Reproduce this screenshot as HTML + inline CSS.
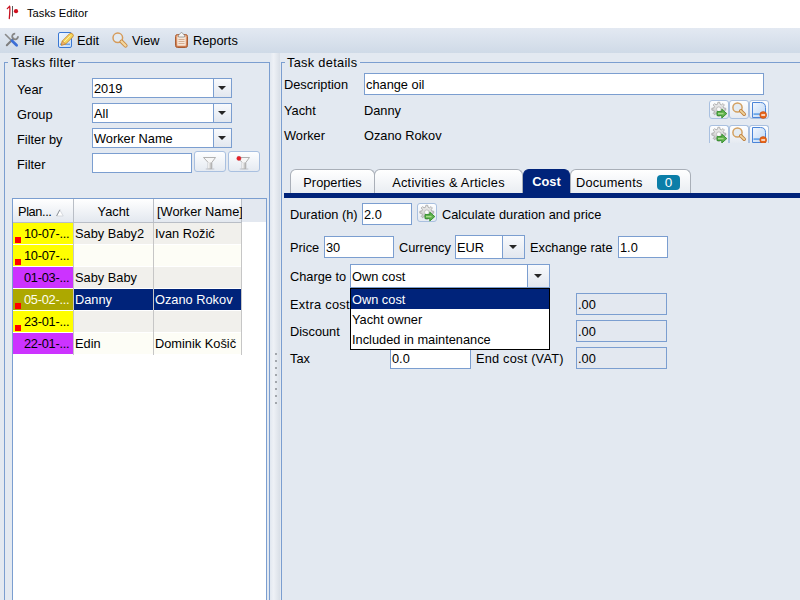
<!DOCTYPE html>
<html><head><meta charset="utf-8"><style>
*{box-sizing:border-box;margin:0;padding:0}
html,body{width:800px;height:600px;overflow:hidden;background:#E3E9F1;font-family:"Liberation Sans",sans-serif;font-size:12.8px;color:#000}
.t{position:absolute;white-space:nowrap;line-height:15px}
.b{position:absolute}
#title{position:absolute;left:0;top:0;width:800px;height:28px;background:#fff}
#menu{position:absolute;left:0;top:28px;width:800px;height:25px;background:linear-gradient(#E3E9F2,#CFDAE7)}
.grp{position:absolute;border:1px solid #7B9ED0}
.gt{position:absolute;background:#E3E9F1;padding:0 2px;line-height:15px;white-space:nowrap}
.fld{position:absolute;background:#fff;border:1px solid #7B9ED0}
.fld span,.cb span{position:absolute;left:1px;white-space:nowrap;line-height:15px}
.cb{position:absolute;background:#fff;border:1px solid #7B9ED0}
.cb .ab{position:absolute;right:0;top:0;bottom:0;width:18px;border-left:1px solid #7B9ED0;background:linear-gradient(#F8FAFD,#E2E7EF)}
.cb .ab:after{content:"";position:absolute;left:4px;top:7px;border-left:4px solid transparent;border-right:4px solid transparent;border-top:4px solid #262626}
.cb .ab.w:after{left:6px;top:9px}
.btn{position:absolute;border:1px solid #A9C0E0;border-radius:3px;background:linear-gradient(#FDFEFF,#E5EAF1)}
.btn svg{position:absolute;left:0;top:0}
.th{position:absolute;top:0;height:24px;border-right:1px solid #B9BEC6;border-bottom:1px solid #B9BEC6;background:linear-gradient(#FFFFFF,#E3E8EF);line-height:15px;padding-top:4.5px;white-space:nowrap}
.cell{position:absolute;height:22px;line-height:21px;white-space:nowrap;overflow:hidden}
.tab{position:absolute;top:169px;height:24px;border:1px solid #A9AFB8;border-bottom:none;border-radius:6px 6px 0 0;background:linear-gradient(#FFFFFF,#E9EDF2);line-height:15px;padding-top:5px;text-align:center;white-space:nowrap}
</style></head><body>
<div id="title"></div>
<svg class="b" style="left:6px;top:4px" width="14" height="18" viewBox="0 0 14 18"><path d="M1.3 4.6 L3.6 2.3 C4.2 3.5 3.9 8 3.3 14.5" stroke="#C8101E" stroke-width="1.3" fill="none" stroke-linecap="round"/><path d="M6.5 2 L6.5 12.5" stroke="#5a5a5a" stroke-width="1"/><circle cx="10" cy="7.2" r="2.1" fill="#D0101E"/></svg>
<div class="t" style="left:27px;top:6px;font-size:11.2px">Tasks Editor</div>
<div id="menu"></div>
<svg class="b" style="left:2px;top:31px" width="18" height="18" viewBox="0 0 18 18"><path d="M4.8 14.2 L11.5 7.5" stroke="#7E7E7E" stroke-width="2" stroke-linecap="round"/><path d="M13.2 2.6 A2.9 2.9 0 1 0 16 5.3" stroke="#858585" stroke-width="1.8" fill="none"/><path d="M3.5 3.5 L8.5 8.5" stroke="#8a8a8a" stroke-width="1.6" stroke-linecap="round"/><path d="M10 9.8 L14.6 14.2" stroke="#3D6FD6" stroke-width="2.8" stroke-linecap="round"/></svg>
<svg class="b" style="left:57px;top:31px" width="18" height="18" viewBox="0 0 18 18"><defs><linearGradient id="dg" x1="0" y1="0" x2="1" y2="1"><stop offset="0" stop-color="#F4F9FF"/><stop offset="1" stop-color="#C5DCF5"/></linearGradient></defs><rect x="1.5" y="1.5" width="13" height="15" rx="1.5" fill="url(#dg)" stroke="#3A78D4" stroke-width="1"/><rect x="3" y="12.5" width="10" height="1.5" fill="#6FA6E8"/><path d="M4.3 14.2 L5.4 9.9 L12.4 2.9 A2.2 2.2 0 0 1 15.6 6.1 L8.6 13.1 Z" fill="#F5D55A" stroke="#C8862E" stroke-width="0.9"/><path d="M6.6 11.4 L13.4 4.6" stroke="#FBF0A8" stroke-width="1"/><path d="M4.3 14.2 L5.4 9.9 L8.6 13.1 Z" fill="#E8B07A" stroke="#C8862E" stroke-width="0.6"/></svg>
<svg class="b" style="left:111px;top:31px" width="18" height="18" viewBox="0 0 18 18"><circle cx="6.8" cy="6.8" r="4.8" fill="#E2EAF2" stroke="#D69B5A" stroke-width="1.5"/><path d="M10.5 10.5 L14.6 14.6" stroke="#C98A45" stroke-width="4" stroke-linecap="round"/><path d="M10.5 10.5 L14.6 14.6" stroke="#F2D69E" stroke-width="2.2" stroke-linecap="round"/></svg>
<svg class="b" style="left:173px;top:31px" width="18" height="18" viewBox="0 0 18 18"><defs><linearGradient id="cg" x1="0" y1="0" x2="0" y2="1"><stop offset="0" stop-color="#E9A57A"/><stop offset="1" stop-color="#C9754A"/></linearGradient></defs><rect x="2.5" y="3.5" width="12" height="13" rx="2" fill="url(#cg)" stroke="#A85E35" stroke-width="1"/><rect x="4.2" y="5.5" width="8.6" height="9.3" rx="0.5" fill="#F6E6D8"/><path d="M5.5 8.5 H11.5 M5.5 10.5 H11.5 M5.5 12.5 H11.5" stroke="#D6AE92" stroke-width="1"/><path d="M5.5 6 L5.5 4.2 L8.5 1.2 L11.5 4.2 L11.5 6 Z" fill="#F4F4F4" stroke="#8E8E8E" stroke-width="0.8"/></svg>
<div class="t" style="left:24px;top:33px">File</div>
<div class="t" style="left:77px;top:33px">Edit</div>
<div class="t" style="left:132px;top:33px">View</div>
<div class="t" style="left:193px;top:33px">Reports</div>
<div class="grp" style="left:4px;top:62px;width:266px;height:560px"></div>
<div class="gt" style="left:8px;top:55px;padding-left:3px;letter-spacing:0.35px">Tasks filter</div>
<div class="t" style="left:17px;top:82px">Year</div>
<div class="cb" style="left:92px;top:78px;width:140px;height:20px"><span style="top:2px">2019</span><div class="ab"></div></div>
<div class="t" style="left:17px;top:107px">Group</div>
<div class="cb" style="left:92px;top:103px;width:140px;height:20px"><span style="top:2px">All</span><div class="ab"></div></div>
<div class="t" style="left:17px;top:132px">Filter by</div>
<div class="cb" style="left:92px;top:128px;width:140px;height:20px"><span style="top:2px">Worker Name</span><div class="ab"></div></div>
<div class="t" style="left:17px;top:157px">Filter</div>
<div class="fld" style="left:92px;top:153px;width:100px;height:20px"></div>
<div class="btn" style="left:194px;top:151px;width:32px;height:21px"><svg width="32" height="21" style="left:-1px;top:-1px"><defs><linearGradient id="fg" x1="0" y1="0" x2="1" y2="0"><stop offset="0" stop-color="#FFFFFF"/><stop offset="1" stop-color="#A8A8A8"/></linearGradient></defs><ellipse cx="16" cy="18" rx="4.5" ry="0.9" fill="#CDD1D7"/><path d="M9.5 6.5 L21.5 6.5 L17.8 11.5 L17.8 17.5 L14.2 17.5 L14.2 11.5 Z" fill="#F7F7F7" stroke="#A8A8A8" stroke-width="0.9"/><rect x="14.2" y="11.5" width="3.6" height="6" fill="url(#fg)"/></svg></div>
<div class="btn" style="left:228px;top:151px;width:32px;height:21px"><svg width="32" height="21" style="left:-1px;top:-1px"><defs><linearGradient id="fg" x1="0" y1="0" x2="1" y2="0"><stop offset="0" stop-color="#FFFFFF"/><stop offset="1" stop-color="#A8A8A8"/></linearGradient></defs><ellipse cx="16" cy="18" rx="4.5" ry="0.9" fill="#CDD1D7"/><path d="M9.5 6.5 L21.5 6.5 L17.8 11.5 L17.8 17.5 L14.2 17.5 L14.2 11.5 Z" fill="#F7F7F7" stroke="#A8A8A8" stroke-width="0.9"/><rect x="14.2" y="11.5" width="3.6" height="6" fill="url(#fg)"/><circle cx="10.9" cy="7.4" r="2.1" fill="#E8202A" stroke="#C01820" stroke-width="0.4"/></svg></div>
<div class="b" style="left:12px;top:198px;width:255px;height:420px;background:#fff;border:1px solid #7B9ED0"></div>
<div class="th" style="left:13px;top:199px;width:61px;padding-left:5px;letter-spacing:-0.4px">Plan...</div>
<svg class="b" style="left:56px;top:209px" width="8" height="8"><path d="M3.8 0.8 L7.2 7 L0.6 7 Z" fill="#fff" stroke="#D2D6DB" stroke-width="0.9"/><path d="M3.8 0.8 L0.6 7" stroke="#8A8E94" stroke-width="0.9"/></svg>
<div class="th" style="left:74px;top:199px;width:80px;text-align:center">Yacht</div>
<div class="th" style="left:154px;top:199px;width:88px;padding-left:3px">[Worker Name]</div>
<div class="th" style="left:242px;top:199px;width:24px;height:23px;border:none;background:#E3E8F0"></div>
<div class="cell" style="left:13px;top:223px;width:60px;background:#FFFF00;border-bottom:1px solid #FFFFFF;color:#000;padding-left:11px;letter-spacing:-0.25px">10-07-...</div>
<div class="b" style="left:15px;top:237px;width:6px;height:6px;background:#FF0000"></div>
<div class="cell" style="left:74px;top:223px;width:79px;background:#F1F0EC;border-bottom:1px solid #fff;color:#000;padding-left:1px">Saby Baby2</div>
<div class="cell" style="left:154px;top:223px;width:87px;background:#F1F0EC;border-bottom:1px solid #fff;color:#000;padding-left:1px">Ivan Rožić</div>
<div class="cell" style="left:13px;top:245px;width:60px;background:#FFFF00;border-bottom:1px solid #FFFFFF;color:#000;padding-left:11px;letter-spacing:-0.25px">10-07-...</div>
<div class="b" style="left:15px;top:259px;width:6px;height:6px;background:#FF0000"></div>
<div class="cell" style="left:74px;top:245px;width:79px;background:#FDFDF6;border-bottom:1px solid #fff;color:#000;padding-left:1px"></div>
<div class="cell" style="left:154px;top:245px;width:87px;background:#FDFDF6;border-bottom:1px solid #fff;color:#000;padding-left:1px"></div>
<div class="cell" style="left:13px;top:267px;width:60px;background:#CC33FF;border-bottom:1px solid #FFFFFF;color:#000;padding-left:11px;letter-spacing:-0.25px">01-03-...</div>
<div class="cell" style="left:74px;top:267px;width:79px;background:#F1F0EC;border-bottom:1px solid #fff;color:#000;padding-left:1px">Saby Baby</div>
<div class="cell" style="left:154px;top:267px;width:87px;background:#F1F0EC;border-bottom:1px solid #fff;color:#000;padding-left:1px"></div>
<div class="cell" style="left:13px;top:289px;width:60px;background:#ADA800;border-bottom:1px solid #FFFFFF;color:#FFFFF0;padding-left:11px;letter-spacing:-0.25px">05-02-...</div>
<div class="b" style="left:15px;top:303px;width:6px;height:6px;background:#FF0000"></div>
<div class="cell" style="left:74px;top:289px;width:79px;background:#00237A;border-bottom:1px solid #fff;color:#fff;padding-left:1px">Danny</div>
<div class="cell" style="left:154px;top:289px;width:87px;background:#00237A;border-bottom:1px solid #fff;color:#fff;padding-left:1px">Ozano Rokov</div>
<div class="cell" style="left:13px;top:311px;width:60px;background:#FFFF00;border-bottom:1px solid #FFFFFF;color:#000;padding-left:11px;letter-spacing:-0.25px">23-01-...</div>
<div class="b" style="left:15px;top:325px;width:6px;height:6px;background:#FF0000"></div>
<div class="cell" style="left:74px;top:311px;width:79px;background:#F1F0EC;border-bottom:1px solid #fff;color:#000;padding-left:1px"></div>
<div class="cell" style="left:154px;top:311px;width:87px;background:#F1F0EC;border-bottom:1px solid #fff;color:#000;padding-left:1px"></div>
<div class="cell" style="left:13px;top:333px;width:60px;background:#CC33FF;border-bottom:1px solid #FFFFFF;color:#000;padding-left:11px;letter-spacing:-0.25px">22-01-...</div>
<div class="cell" style="left:74px;top:333px;width:79px;background:#FDFDF6;border-bottom:1px solid #fff;color:#000;padding-left:1px">Edin</div>
<div class="cell" style="left:154px;top:333px;width:87px;background:#FDFDF6;border-bottom:1px solid #fff;color:#000;padding-left:1px">Dominik Košič</div>
<div class="b" style="left:73px;top:223px;width:1px;height:132px;background:#C6C6C6"></div>
<div class="b" style="left:153px;top:223px;width:1px;height:132px;background:#C6C6C6"></div>
<div class="b" style="left:241px;top:223px;width:1px;height:132px;background:#C6C6C6"></div>
<div class="b" style="left:271px;top:53px;width:9px;height:547px;background:linear-gradient(90deg,#E6EBF2,#EEF1F6 30%,#D9DFE7)"></div>
<div class="b" style="left:275px;top:353px;width:2px;height:2px;background:#A2A6AC"></div>
<div class="b" style="left:275px;top:360px;width:2px;height:2px;background:#A2A6AC"></div>
<div class="b" style="left:275px;top:367px;width:2px;height:2px;background:#A2A6AC"></div>
<div class="b" style="left:275px;top:374px;width:2px;height:2px;background:#A2A6AC"></div>
<div class="b" style="left:275px;top:381px;width:2px;height:2px;background:#A2A6AC"></div>
<div class="b" style="left:275px;top:388px;width:2px;height:2px;background:#A2A6AC"></div>
<div class="b" style="left:275px;top:395px;width:2px;height:2px;background:#A2A6AC"></div>
<div class="b" style="left:275px;top:402px;width:2px;height:2px;background:#A2A6AC"></div>
<div class="grp" style="left:281px;top:62px;width:600px;height:560px"></div>
<div class="gt" style="left:285px;top:55px;padding-right:3px;letter-spacing:0.3px">Task details</div>
<div class="t" style="left:284px;top:77px">Description</div>
<div class="fld" style="left:364px;top:73px;width:400px;height:22px"><span style="top:3px">change oil</span></div>
<div class="t" style="left:284px;top:103px">Yacht</div>
<div class="t" style="left:364px;top:103px">Danny</div>
<div class="t" style="left:284px;top:128px">Worker</div>
<div class="t" style="left:364px;top:128px">Ozano Rokov</div>
<div class="btn" style="left:709px;top:100px;width:20px;height:19px;"><svg width="20" height="19" style="left:-1px;top:-1px"><defs><linearGradient id="gg" x1="0" y1="0" x2="0" y2="1"><stop offset="0" stop-color="#F2F2F2"/><stop offset="1" stop-color="#BDBDBD"/></linearGradient></defs><path d="M14.88 8.09 L16.73 8.24 L16.73 10.16 L14.88 10.31 L14.18 12.00 L15.38 13.42 L14.02 14.78 L12.60 13.58 L10.91 14.28 L10.76 16.13 L8.84 16.13 L8.69 14.28 L7.00 13.58 L5.58 14.78 L4.22 13.42 L5.42 12.00 L4.72 10.31 L2.87 10.16 L2.87 8.24 L4.72 8.09 L5.42 6.40 L4.22 4.98 L5.58 3.62 L7.00 4.82 L8.69 4.12 L8.84 2.27 L10.76 2.27 L10.91 4.12 L12.60 4.82 L14.02 3.62 L15.38 4.98 L14.18 6.40 Z" fill="url(#gg)" stroke="#A2A2A2" stroke-width="0.8"/><circle cx="9.8" cy="9.2" r="2.3" fill="#FAFAFA" stroke="#A8A8A8" stroke-width="0.6"/><path d="M8 11.6 H12.8 V9.2 L17.8 13.6 L12.8 18 V15.6 H8 Z" fill="#62B24E" stroke="#2E8C28" stroke-width="0.9"/><path d="M9 13.6 H14.5" stroke="#A6DB8E" stroke-width="1.4"/></svg></div>
<div class="btn" style="left:729px;top:100px;width:20px;height:19px;"><svg width="20" height="19" style="left:-1px;top:-1px"><circle cx="8.5" cy="7.5" r="4.6" fill="#E4ECF3" stroke="#D3A060" stroke-width="1.5"/><path d="M11.8 10.8 L15.2 14.2" stroke="#C08040" stroke-width="3.6" stroke-linecap="round"/><path d="M11.8 10.8 L15.2 14.2" stroke="#EFD49C" stroke-width="1.8" stroke-linecap="round"/></svg></div>
<div class="btn" style="left:749px;top:100px;width:20px;height:19px;"><svg width="20" height="19" style="left:-1px;top:-1px"><defs><linearGradient id="dg2" x1="0" y1="0" x2="1" y2="1"><stop offset="0" stop-color="#F2F7FE"/><stop offset="1" stop-color="#BCD6F4"/></linearGradient></defs><path d="M3.5 2.5 H11.5 Q16.5 2.5 16.5 7.5 V17.5 H3.5 Z" fill="url(#dg2)" stroke="#4A84D8" stroke-width="1"/><rect x="4.5" y="13.3" width="9" height="1.6" fill="#5FA0E8"/><circle cx="14.2" cy="15" r="3.4" fill="#E8661A" stroke="#C04A10" stroke-width="0.6"/><rect x="12.3" y="14.3" width="3.8" height="1.4" fill="#fff"/></svg></div>
<div class="btn" style="left:709px;top:125px;width:20px;height:19px;height:18px;border-bottom:none;border-radius:3px 3px 0 0;overflow:hidden;"><svg width="20" height="19" style="left:-1px;top:-1px"><defs><linearGradient id="gg" x1="0" y1="0" x2="0" y2="1"><stop offset="0" stop-color="#F2F2F2"/><stop offset="1" stop-color="#BDBDBD"/></linearGradient></defs><path d="M14.88 8.09 L16.73 8.24 L16.73 10.16 L14.88 10.31 L14.18 12.00 L15.38 13.42 L14.02 14.78 L12.60 13.58 L10.91 14.28 L10.76 16.13 L8.84 16.13 L8.69 14.28 L7.00 13.58 L5.58 14.78 L4.22 13.42 L5.42 12.00 L4.72 10.31 L2.87 10.16 L2.87 8.24 L4.72 8.09 L5.42 6.40 L4.22 4.98 L5.58 3.62 L7.00 4.82 L8.69 4.12 L8.84 2.27 L10.76 2.27 L10.91 4.12 L12.60 4.82 L14.02 3.62 L15.38 4.98 L14.18 6.40 Z" fill="url(#gg)" stroke="#A2A2A2" stroke-width="0.8"/><circle cx="9.8" cy="9.2" r="2.3" fill="#FAFAFA" stroke="#A8A8A8" stroke-width="0.6"/><path d="M8 11.6 H12.8 V9.2 L17.8 13.6 L12.8 18 V15.6 H8 Z" fill="#62B24E" stroke="#2E8C28" stroke-width="0.9"/><path d="M9 13.6 H14.5" stroke="#A6DB8E" stroke-width="1.4"/></svg></div>
<div class="btn" style="left:729px;top:125px;width:20px;height:19px;height:18px;border-bottom:none;border-radius:3px 3px 0 0;overflow:hidden;"><svg width="20" height="19" style="left:-1px;top:-1px"><circle cx="8.5" cy="7.5" r="4.6" fill="#E4ECF3" stroke="#D3A060" stroke-width="1.5"/><path d="M11.8 10.8 L15.2 14.2" stroke="#C08040" stroke-width="3.6" stroke-linecap="round"/><path d="M11.8 10.8 L15.2 14.2" stroke="#EFD49C" stroke-width="1.8" stroke-linecap="round"/></svg></div>
<div class="btn" style="left:749px;top:125px;width:20px;height:19px;height:18px;border-bottom:none;border-radius:3px 3px 0 0;overflow:hidden;"><svg width="20" height="19" style="left:-1px;top:-1px"><defs><linearGradient id="dg2" x1="0" y1="0" x2="1" y2="1"><stop offset="0" stop-color="#F2F7FE"/><stop offset="1" stop-color="#BCD6F4"/></linearGradient></defs><path d="M3.5 2.5 H11.5 Q16.5 2.5 16.5 7.5 V17.5 H3.5 Z" fill="url(#dg2)" stroke="#4A84D8" stroke-width="1"/><rect x="4.5" y="13.3" width="9" height="1.6" fill="#5FA0E8"/><circle cx="14.2" cy="15" r="3.4" fill="#E8661A" stroke="#C04A10" stroke-width="0.6"/><rect x="12.3" y="14.3" width="3.8" height="1.4" fill="#fff"/></svg></div>
<div class="tab" style="left:290px;width:85px">Properties</div>
<div class="tab" style="left:374px;width:149px;letter-spacing:0.25px">Activities &amp; Articles</div>
<div class="tab" style="left:523px;width:47px;background:#00237A;border-color:#00237A;color:#fff;font-weight:bold;padding-top:4px">Cost</div>
<div class="tab" style="left:570px;width:121px;text-align:left;padding-left:5px;letter-spacing:0.2px">Documents</div>
<div class="b" style="left:657px;top:175px;width:23px;height:15px;border-radius:4px;background:#0B7EA8;color:#fff;text-align:center;line-height:15px;font-size:13.5px">0</div>
<div class="b" style="left:284px;top:193px;width:516px;height:5px;background:#00237A"></div>
<div class="t" style="left:290px;top:207px">Duration (h)</div>
<div class="fld" style="left:362px;top:203px;width:50px;height:22px"><span style="top:3px">2.0</span></div>
<div class="btn" style="left:417px;top:203px;width:20px;height:19px"><svg width="20" height="19" style="left:-1px;top:-1px"><defs><linearGradient id="gg" x1="0" y1="0" x2="0" y2="1"><stop offset="0" stop-color="#F2F2F2"/><stop offset="1" stop-color="#BDBDBD"/></linearGradient></defs><path d="M14.88 8.09 L16.73 8.24 L16.73 10.16 L14.88 10.31 L14.18 12.00 L15.38 13.42 L14.02 14.78 L12.60 13.58 L10.91 14.28 L10.76 16.13 L8.84 16.13 L8.69 14.28 L7.00 13.58 L5.58 14.78 L4.22 13.42 L5.42 12.00 L4.72 10.31 L2.87 10.16 L2.87 8.24 L4.72 8.09 L5.42 6.40 L4.22 4.98 L5.58 3.62 L7.00 4.82 L8.69 4.12 L8.84 2.27 L10.76 2.27 L10.91 4.12 L12.60 4.82 L14.02 3.62 L15.38 4.98 L14.18 6.40 Z" fill="url(#gg)" stroke="#A2A2A2" stroke-width="0.8"/><circle cx="9.8" cy="9.2" r="2.3" fill="#FAFAFA" stroke="#A8A8A8" stroke-width="0.6"/><path d="M8 11.6 H12.8 V9.2 L17.8 13.6 L12.8 18 V15.6 H8 Z" fill="#62B24E" stroke="#2E8C28" stroke-width="0.9"/><path d="M9 13.6 H14.5" stroke="#A6DB8E" stroke-width="1.4"/></svg></div>
<div class="t" style="left:442px;top:207px">Calculate duration and price</div>
<div class="t" style="left:290px;top:240px">Price</div>
<div class="fld" style="left:324px;top:236px;width:70px;height:22px"><span style="top:3px">30</span></div>
<div class="t" style="left:399px;top:240px">Currency</div>
<div class="cb" style="left:455px;top:235px;width:70px;height:24px"><span style="top:4px">EUR</span><div class="ab w" style="width:22px"></div></div>
<div class="t" style="left:530px;top:240px">Exchange rate</div>
<div class="fld" style="left:618px;top:236px;width:50px;height:22px"><span style="top:3px">1.0</span></div>
<div class="t" style="left:290px;top:269px">Charge to</div>
<div class="cb" style="left:350px;top:264px;width:200px;height:24px"><span style="top:4px">Own cost</span><div class="ab w" style="width:22px"></div></div>
<div class="t" style="left:290px;top:297px;letter-spacing:0.3px">Extra cost</div>
<div class="t" style="left:290px;top:324px">Discount</div>
<div class="t" style="left:290px;top:351px">Tax</div>
<div class="fld" style="left:390px;top:347px;width:81px;height:22px"><span style="top:3px">0.0</span></div>
<div class="t" style="left:476px;top:351px;letter-spacing:0.2px">End cost (VAT)</div>
<div class="fld" style="left:576px;top:293px;width:91px;height:22px;background:#E3E8F0"><span style="top:3px">.00</span></div>
<div class="fld" style="left:576px;top:320px;width:91px;height:22px;background:#E3E8F0"><span style="top:3px">.00</span></div>
<div class="fld" style="left:576px;top:347px;width:91px;height:22px;background:#E3E8F0"><span style="top:3px">.00</span></div>
<div class="b" style="left:350px;top:288px;width:200px;height:62px;background:#fff;border:1px solid #000"></div>
<div class="b" style="left:351px;top:289px;width:198px;height:20px;background:#00237A"></div>
<div class="t" style="left:352px;top:292px;color:#fff">Own cost</div>
<div class="t" style="left:352px;top:312px">Yacht owner</div>
<div class="t" style="left:352px;top:332px">Included in maintenance</div>
</body></html>
